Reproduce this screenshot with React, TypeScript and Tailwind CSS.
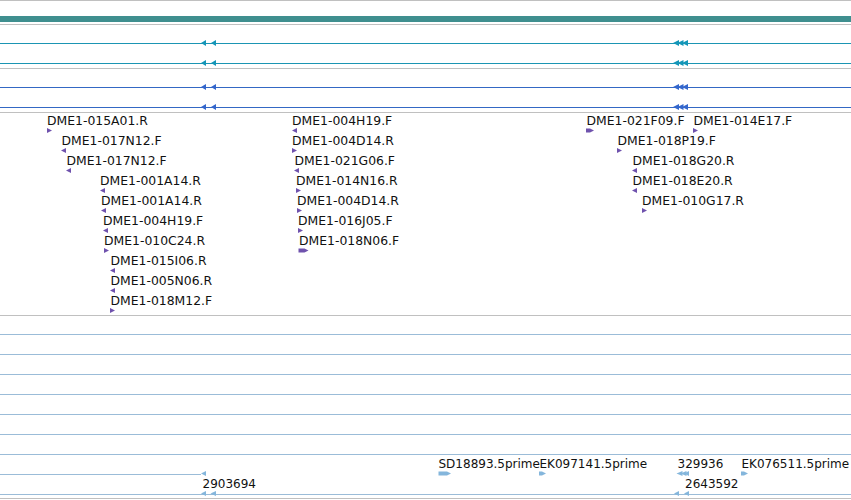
import React from "react";

type Dir = "l" | "r";

interface Glyph {
  x: number;
  y: number;
  dir: Dir;
  w?: number;
  h?: number;
}

interface Label {
  text: string;
  x: number;
  y: number;
}

// small strand arrows drawn on the tracks
const arrowPoints = ({ x, y, dir, w = 5, h = 5 }: Glyph) => {
  const mid = y + h / 2;
  if (w <= 6) {
    return dir === "r"
      ? `${x},${y} ${x + w},${mid} ${x},${y + h}`
      : `${x + w},${y} ${x},${mid} ${x + w},${y + h}`;
  }
  // wider feature: body plus head
  return dir === "r"
    ? `${x},${y + 0.5} ${x + w - 4},${y + 0.5} ${x + w},${mid} ${x + w - 4},${y + h - 0.5} ${x},${y + h - 0.5}`
    : `${x + w},${y + 0.5} ${x + 4},${y + 0.5} ${x},${mid} ${x + 4},${y + h - 0.5} ${x + w},${y + h - 0.5}`;
};

const Arrows = ({ glyphs, color, height }: { glyphs: Glyph[]; color: string; height: number }) => (
  <svg className="absolute left-0 top-0" width={851} height={height} viewBox={`0 0 851 ${height}`}>
    {glyphs.map((g, i) => (
      <polygon key={i} points={arrowPoints(g)} fill={color} />
    ))}
  </svg>
);

const Separator = () => <div className="h-px w-full bg-[#c0c0c0]" />;

// two tick clusters on the overview tracks
const overviewGlyphs = (rowTop: number): Glyph[] => [
  { x: 201, y: rowTop, dir: "l", w: 5, h: 6 },
  { x: 211, y: rowTop, dir: "l", w: 5, h: 6 },
  { x: 673, y: rowTop, dir: "l", w: 6, h: 6 },
  { x: 677.5, y: rowTop, dir: "l", w: 6, h: 6 },
  { x: 682, y: rowTop, dir: "l", w: 6, h: 6 },
];

function OverviewTrack({ lineColor, arrowColor }: { lineColor: string; arrowColor: string }) {
  return (
    <div className="relative h-[43px] w-full">
      <div className="h-[18px]" />
      <div className="h-px w-full" style={{ backgroundColor: lineColor }} />
      <div className="h-[19px]" />
      <div className="h-px w-full" style={{ backgroundColor: lineColor }} />
      <Arrows glyphs={[...overviewGlyphs(15), ...overviewGlyphs(35)]} color={arrowColor} height={43} />
    </div>
  );
}

const cloneLabels: Label[] = [
  { text: "DME1-015A01.R", x: 47, y: 0 },
  { text: "DME1-017N12.F", x: 61.5, y: 1 },
  { text: "DME1-017N12.F", x: 66.5, y: 2 },
  { text: "DME1-001A14.R", x: 100, y: 3 },
  { text: "DME1-001A14.R", x: 101, y: 4 },
  { text: "DME1-004H19.F", x: 103, y: 5 },
  { text: "DME1-010C24.R", x: 104, y: 6 },
  { text: "DME1-015I06.R", x: 110.5, y: 7 },
  { text: "DME1-005N06.R", x: 110.5, y: 8 },
  { text: "DME1-018M12.F", x: 110.5, y: 9 },
  { text: "DME1-004H19.F", x: 292, y: 0 },
  { text: "DME1-004D14.R", x: 292, y: 1 },
  { text: "DME1-021G06.F", x: 294.5, y: 2 },
  { text: "DME1-014N16.R", x: 296, y: 3 },
  { text: "DME1-004D14.R", x: 297, y: 4 },
  { text: "DME1-016J05.F", x: 298, y: 5 },
  { text: "DME1-018N06.F", x: 299, y: 6 },
  { text: "DME1-021F09.F", x: 586.5, y: 0 },
  { text: "DME1-014E17.F", x: 693.5, y: 0 },
  { text: "DME1-018P19.F", x: 617.5, y: 1 },
  { text: "DME1-018G20.R", x: 632.5, y: 2 },
  { text: "DME1-018E20.R", x: 632.5, y: 3 },
  { text: "DME1-010G17.R", x: 642, y: 4 },
];

const cloneGlyphs: Glyph[] = [
  { x: 47, y: 15, dir: "r" },
  { x: 61, y: 35, dir: "l" },
  { x: 66, y: 55, dir: "l" },
  { x: 100, y: 75, dir: "l" },
  { x: 101, y: 95, dir: "l" },
  { x: 103, y: 115, dir: "l" },
  { x: 104, y: 135, dir: "r" },
  { x: 110, y: 155, dir: "l" },
  { x: 110, y: 175, dir: "l" },
  { x: 110, y: 195, dir: "r" },
  { x: 292, y: 15, dir: "l" },
  { x: 292, y: 35, dir: "r" },
  { x: 294, y: 55, dir: "l" },
  { x: 296, y: 75, dir: "r" },
  { x: 297, y: 95, dir: "r" },
  { x: 298, y: 115, dir: "r" },
  { x: 298.5, y: 135, dir: "r", w: 10 },
  { x: 586, y: 15, dir: "r", w: 8 },
  { x: 693, y: 15, dir: "r" },
  { x: 617, y: 35, dir: "r" },
  { x: 632, y: 55, dir: "l" },
  { x: 632, y: 75, dir: "l" },
  { x: 642, y: 95, dir: "r" },
];

function CloneTrack() {
  return (
    <div className="relative h-[202px] w-full overflow-hidden">
      {cloneLabels.map((l, i) => (
        <span
          key={i}
          className="absolute whitespace-nowrap text-[12.4px] leading-[12px] text-[#111]"
          style={{ left: l.x, top: 1.5 + l.y * 20 }}
        >
          {l.text}
        </span>
      ))}
      <Arrows glyphs={cloneGlyphs} color="#6f52ad" height={202} />
    </div>
  );
}

const estLabels: Label[] = [
  { text: "SD18893.5prime", x: 438.5, y: 142 },
  { text: "EK097141.5prime", x: 539.5, y: 142 },
  { text: "329936", x: 677.5, y: 142 },
  { text: "EK076511.5prime", x: 741.5, y: 142 },
  { text: "2903694", x: 202.5, y: 162 },
  { text: "2643592", x: 685, y: 162 },
];

const estGlyphs: Glyph[] = [
  { x: 438.5, y: 155, dir: "r", w: 12.5 },
  { x: 539, y: 155, dir: "r", w: 7 },
  { x: 676.5, y: 155, dir: "l", w: 6 },
  { x: 680.5, y: 155, dir: "l", w: 6 },
  { x: 684, y: 155, dir: "l", w: 5 },
  { x: 741, y: 155, dir: "r", w: 7 },
  { x: 201, y: 155, dir: "l", w: 5 },
  { x: 201, y: 175, dir: "l", w: 5 },
  { x: 210.5, y: 175, dir: "l", w: 5.5 },
  { x: 674, y: 175, dir: "l", w: 5 },
  { x: 684, y: 175, dir: "l", w: 5 },
];

function EstTrack() {
  const rows = [0, 1, 2, 3, 4, 5, 6, 7, 8];
  return (
    <div className="relative h-[182px] w-full">
      <div className="h-[18px]" />
      {rows.map((r) => (
        <div key={r} className="h-[20px]">
          <div className={`h-px bg-[#9bbcd8] ${r === 7 ? "w-[201px]" : "w-full"}`} />
        </div>
      ))}
      {estLabels.map((l, i) => (
        <span
          key={i}
          className="absolute whitespace-nowrap text-[12px] leading-[12px] text-[#111]"
          style={{ left: l.x, top: l.y }}
        >
          {l.text}
        </span>
      ))}
      <Arrows glyphs={estGlyphs} color="#84b6dc" height={182} />
    </div>
  );
}

export default function App() {
  return (
    <div
      className="h-[500px] w-[851px] overflow-hidden bg-white"
      style={{ fontFamily: '"DejaVu Sans", "Liberation Sans", sans-serif' }}
    >
      <Separator />
      <div className="h-[15px]" />
      <div className="h-[6px] w-full bg-[#3f8f8f]" />
      <div className="h-[2px]" />
      <Separator />
      <OverviewTrack lineColor="#1b95b3" arrowColor="#1496b8" />
      <Separator />
      <OverviewTrack lineColor="#3468c4" arrowColor="#3366cc" />
      <Separator />
      <CloneTrack />
      <Separator />
      <EstTrack />
      <Separator />
    </div>
  );
}
